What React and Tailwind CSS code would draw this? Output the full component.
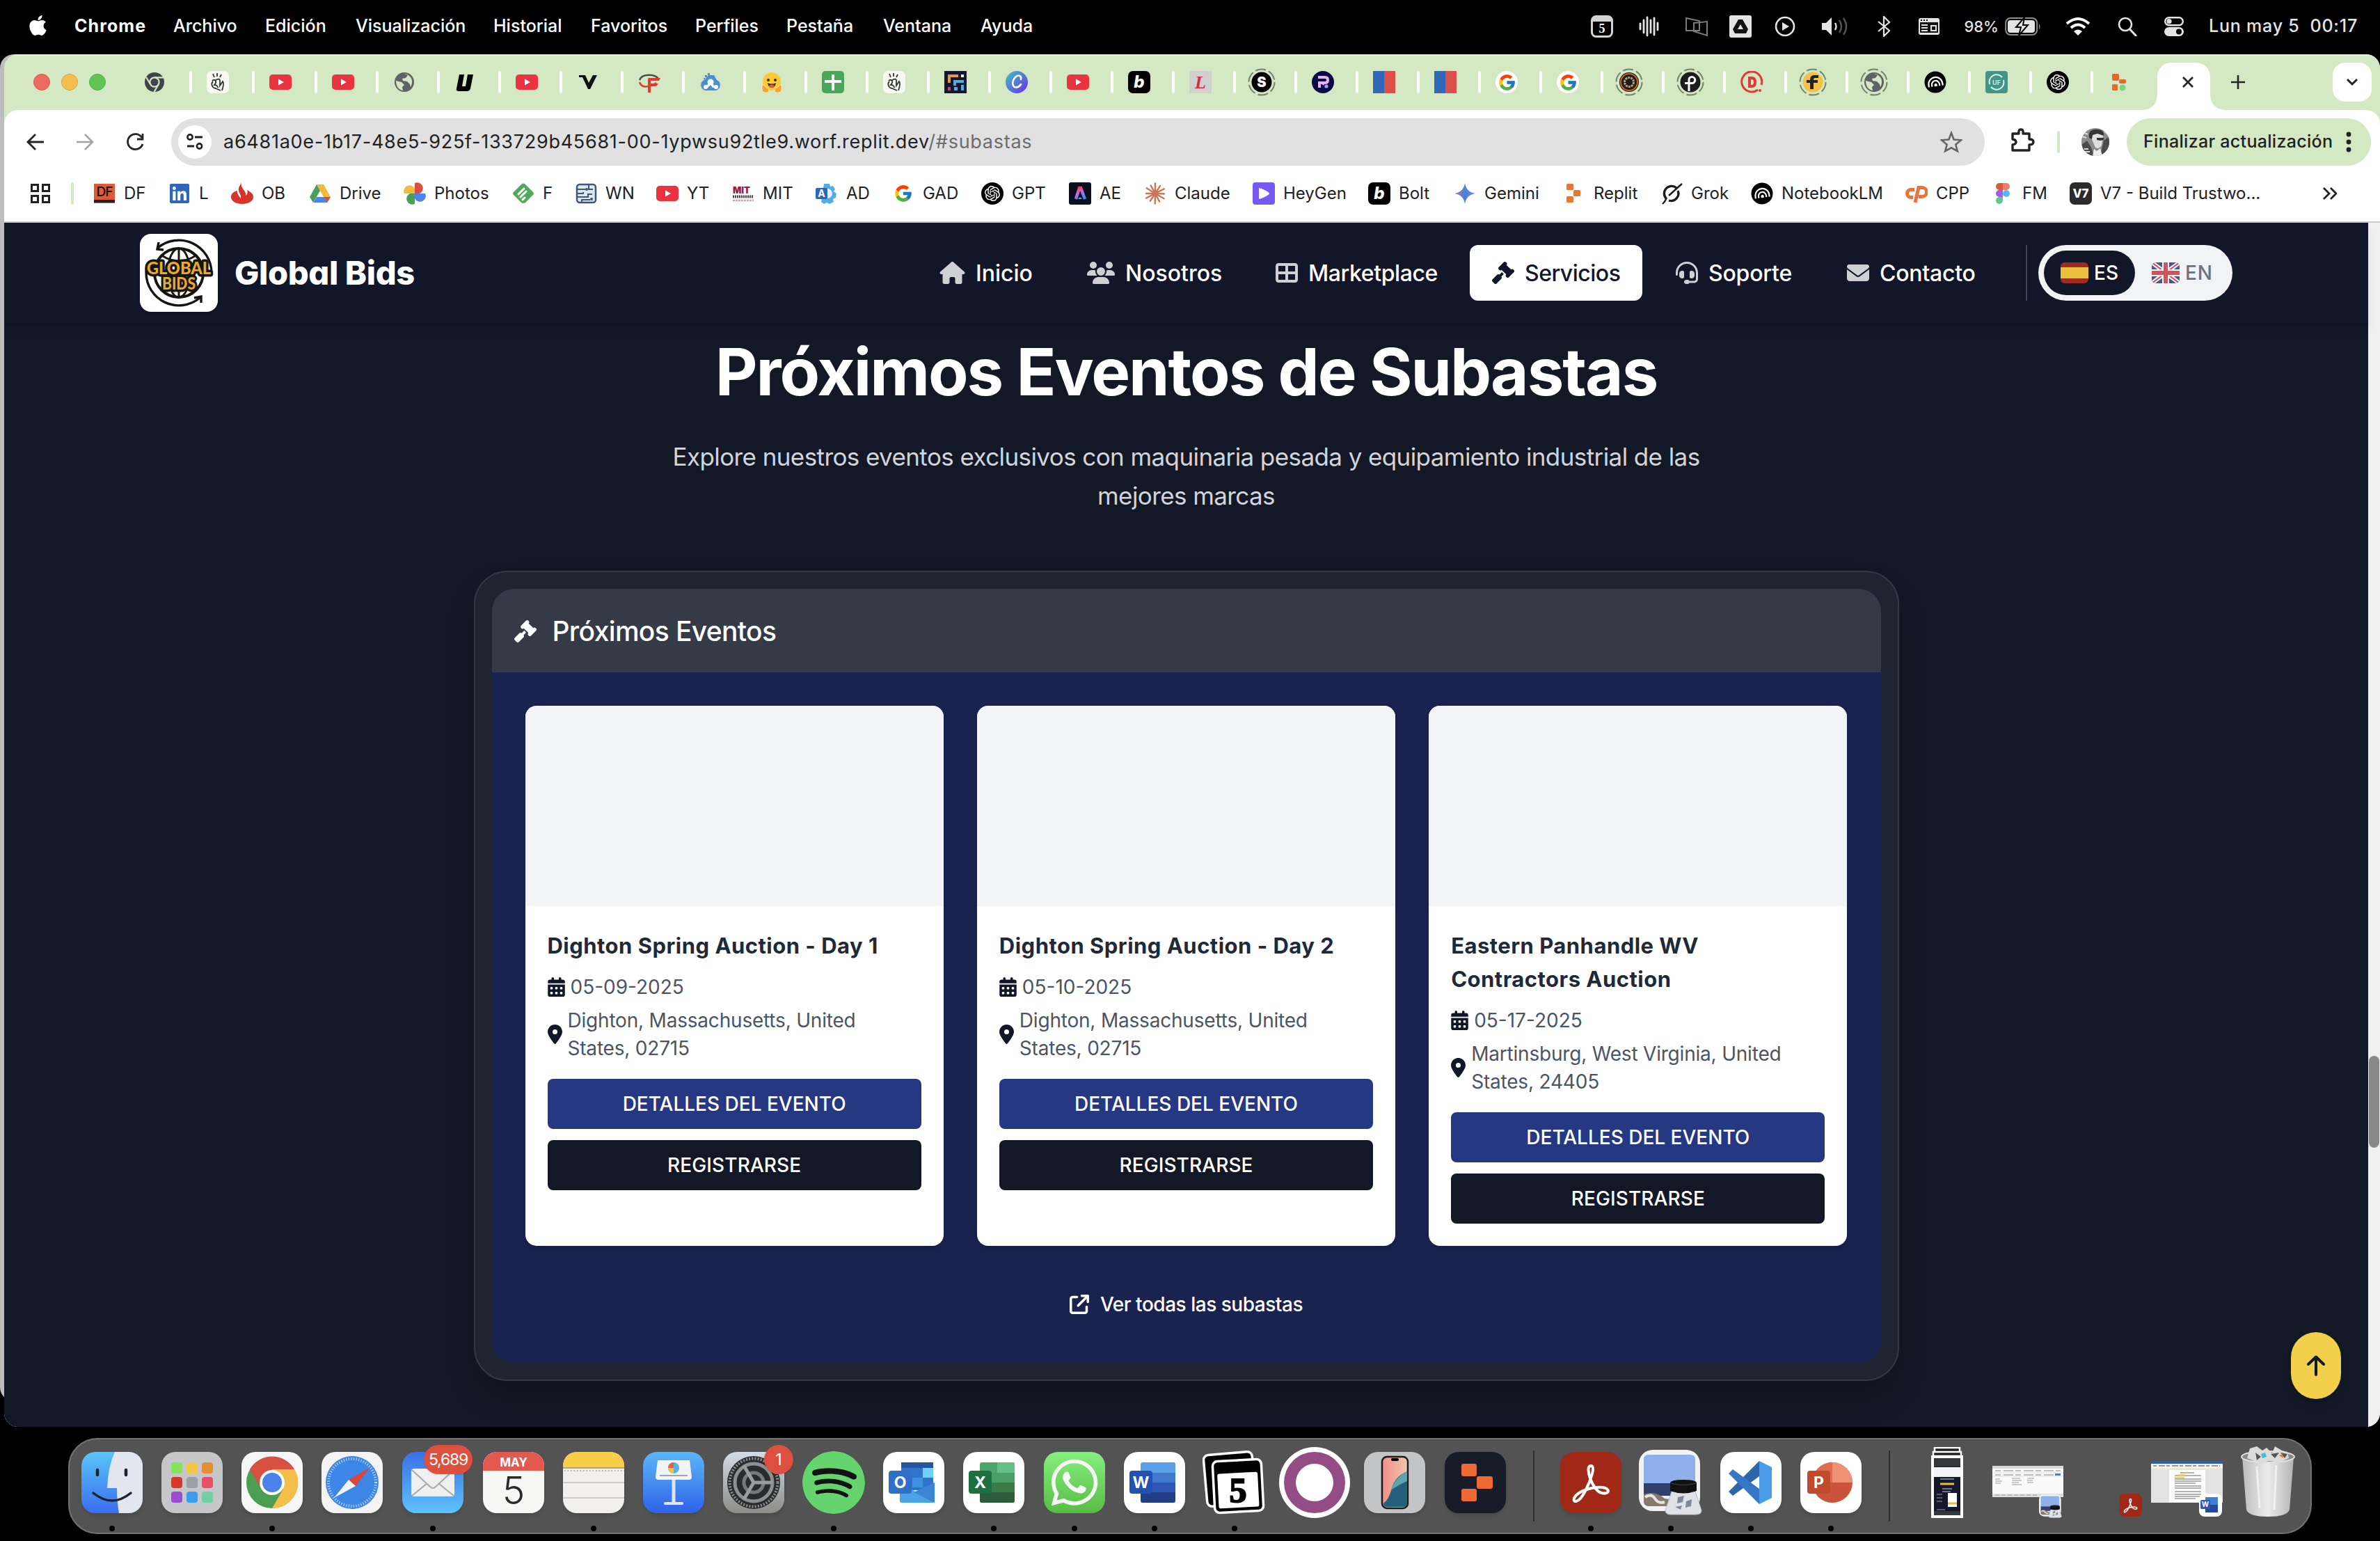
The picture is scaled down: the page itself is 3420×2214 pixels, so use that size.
import React from "react";
import { FaApple, FaLinkedin, FaWhatsapp } from "react-icons/fa";
import { FaHouse, FaUsers, FaTableCellsLarge, FaGavel, FaHeadset, FaEnvelope, FaCalendarDays, FaLocationDot, FaArrowUpRightFromSquare } from "react-icons/fa6";
import { FcGoogle } from "react-icons/fc";
import { SiOpenai, SiSpotify } from "react-icons/si";

const S = ({ w = 32, h, vb, children, className = "" }) => (
  <svg width={w} height={h ?? w} viewBox={vb ?? `0 0 ${w} ${h ?? w}`} fill="none" className={`shrink-0 ${className}`}>
    {children}
  </svg>
);

/* ---------- small icons for tabs and bookmarks ---------- */
const ChromeMono = () => (
  <S>
    <circle cx="16" cy="16" r="14" fill="#414549" />
    <circle cx="16" cy="16" r="6.6" stroke="#d3e8c3" strokeWidth="2.2" />
    <path d="M16 9.4H29M10.3 19.3 4 9M21.7 19.3 15.5 30" stroke="#d3e8c3" strokeWidth="2.2" />
  </S>
);
const Snap = () => (
  <S>
    <rect width="32" height="32" rx="7" fill="#f6faf2" />
    <path d="M9 4l2 5M15 3v5M21 5l-2 4M8 14c3-3 6 0 5 3l-2 3c3 0 5 2 5 4M13 13c4-2 6-2 6 1v7l4-6c2 2 1 7-1 13M9 15c-3 3-2 9 4 10l7 3" stroke="#333" strokeWidth="1.8" />
  </S>
);
const YT = () => (
  <S>
    <rect y="5" width="32" height="22" rx="5" fill="#eb3340" />
    <path d="M13 11.5v9l8-4.5z" fill="#fff" />
  </S>
);
const Dash = ({ children }) => (
  <S w={40} className="-m-1">
    <circle cx="20" cy="20" r="18.5" stroke="#74836c" strokeWidth="2" strokeDasharray="15 4.4" />
    {children}
  </S>
);
const GlobeShape = ({ cx = 16, r = 14 }) => (
  <>
    <circle cx={cx} cy={cx} r={r} fill="#5f6368" />
    <g transform={`translate(${cx - 16} ${cx - 16})`}>
      <path d="M4 14l8 2 4 4-3 3 1 5c-6-1-10-6-10-14zM16 4l5 2-3 4-5 1 1 3 6 1 4 4 1 4c3-5 3-11-1-15-3-3-5-4-8-4z" fill="#d3e8c3" />
    </g>
  </>
);
const Globe = () => <S><GlobeShape /></S>;
const UItal = () => <S><path d="M7 5h7l-3 17h5l3-17h8l-4 20q-1 4-5 4H6q-4 0-3-4z" fill="#000" /></S>;
const VMark = () => <S><path d="M3 6h9l5 11 6-11h6L19 26h-3L8 9H3z" fill="#111" /></S>;
const RF = () => (
  <S>
    <path d="M2 13C5 4 24 3 30 12" stroke="#4b4b48" strokeWidth="2.5" />
    <path d="M15 10h17l-2 4H18v4h11l-3 4h-8v9h-4V14q0-4 1-4z" fill="#df3d31" />
    <path d="M2 16c3 9 13 8 24 1" stroke="#df3d31" strokeWidth="2.5" />
  </S>
);
const Cloud = () => (
  <S>
    <path d="M8 28a8 8 0 0 1-1-15l6-7h8l4 7a8 8 0 0 1-1 15z" fill="#4a8dd2" />
    <circle cx="16" cy="16" r="4.5" fill="#fff" /><circle cx="9" cy="23" r="3" fill="#fff" /><circle cx="24" cy="23" r="3" fill="#fff" /><path d="M16 14l8 10h-5l-3-4-4 4H8z" fill="#fff" />
    <path d="M8 6h3v3H8zM12 3h3v3h-3zM6 10h2v2H6z" fill="#4a8dd2" />
  </S>
);
const Hug = () => (
  <S>
    <circle cx="16" cy="15" r="13" fill="#fdc934" /><circle cx="11" cy="13" r="2" fill="#3b3020" /><circle cx="21" cy="13" r="2" fill="#3b3020" />
    <path d="M10 17q6 3 12 0-1 7-6 7t-6-7z" fill="#3b3020" /><path d="M12 21q4-3 8 0-2 3-4 3t-4-3z" fill="#e8574d" />
    <path d="M2 20q3-1 5 3l4 2q2 4-1 6-7 1-8-4zM30 20q-3-1-5 3l-4 2q-2 4 1 6 7 1 8-4z" fill="#f6a52c" stroke="#fff4dc" strokeWidth=".8" />
  </S>
);
const Plus = () => <S><rect width="32" height="32" rx="5" fill="#4ba65b" /><path d="M14 5h4v8h10v4H18v11h-4V17H4v-4h10z" fill="#fff" /></S>;
const Pixel = () => (
  <S>
    <rect width="32" height="32" fill="#15162e" />
    <path d="M5 5h15v4H9v8H5z" fill="#e39a3c" /><path d="M24 5h4v4h-4z" fill="#fff" />
    <path d="M13 13h15v4H17v4h-4zM24 20h4v8h-4zM14 23h5v5h-5z" fill="#4fb0dd" /><path d="M5 23h4v5H5z" fill="#d53b62" />
  </S>
);
const Canva = () => (
  <S>
    <defs><linearGradient id="cv" x1="0" y1="0" x2="1" y2="1"><stop stopColor="#3fc4cc" /><stop offset="1" stopColor="#6b2be8" /></linearGradient></defs>
    <circle cx="16" cy="16" r="16" fill="url(#cv)" />
    <path d="M22 12c1-5-3-7-7-4s-6 9-4 13 8 3 11-2" stroke="#fff" strokeWidth="2.6" strokeLinecap="round" />
  </S>
);
const LetterTile = ({ bg, ch, fg = "#fff", rx = 7, size = 22, font = "Inter", italic, y = 24 }) => (
  <S>
    <rect width="32" height="32" rx={rx} fill={bg} />
    <text x="16" y={y} textAnchor="middle" fontSize={size} fontWeight="800" fontFamily={font} fontStyle={italic ? "italic" : "normal"} fill={fg}>{ch}</text>
  </S>
);
const Bolt = () => <LetterTile bg="#000" ch="b" italic size={24} />;
const LMark = () => <LetterTile bg="#d0d0ce" ch="L" fg="#cf2f45" rx={0} size={26} font="Liberation Serif" italic y={25} />;
const SDash = () => <Dash><circle cx="20" cy="20" r="14.5" fill="#000" /><text x="20" y="27" textAnchor="middle" fontSize="20" fontWeight="900" fontFamily="Inter" fill="#fff">S</text></Dash>;
const RPurple = () => <S><circle cx="16" cy="16" r="16" fill="#0b0848" /><path d="M9 9h10q4 0 4 4t-4 4h-8v7M16 18l2 1" stroke="#e6b3ea" strokeWidth="4" /><circle cx="21" cy="22" r="2.6" fill="#9fa8f5" /></S>;
const BlueRed = () => <S><path d="M0 0h16v32H0z" fill="#3168b8" /><path d="M16 0h16v32H16z" fill="#dc504c" /></S>;
const GTab = () => <div className="flex size-8 items-center justify-center rounded-full bg-white"><FcGoogle className="size-[27px]" /></div>;
const Ring = () => <Dash><circle cx="20" cy="20" r="14" fill="#1d1a17" /><circle cx="20" cy="20" r="12" stroke="#c8622c" strokeWidth="2" /><circle cx="20" cy="20" r="6.5" stroke="#b59a80" strokeWidth="3" strokeDasharray="3 1" /></Dash>;
const PDash = () => <Dash><circle cx="20" cy="20" r="14.5" fill="#1c1c1e" /><path d="M18 33V15.500a4.500 4.500 0 1 1 4 6H12" stroke="#fff" strokeWidth="3" /></Dash>;
const DRed = () => (
  <S><path d="M25 27A14.500 14.500 0 1 1 30 20" stroke="#de3a3a" strokeWidth="3" /><path d="M11 8h5q7 0 7 8t-7 8h-5z M15 12v8h1q3 0 3-4t-3-4z" fill="#de3a3a" fillRule="evenodd" /><circle cx="28" cy="28" r="2" fill="#de3a3a" /></S>
);
const FDash = () => <Dash><circle cx="20" cy="20" r="14.5" fill="#f4c045" /><path d="M28 10v4h-5q-2 0-2 3h6v4h-6v9h-5v-9h-5v-4h5q0-7 6-7z" fill="#222" /></Dash>;
const GlobeDash = () => <Dash><GlobeShape cx={20} r={14} /></Dash>;
const Notebook = () => (
  <S><circle cx="16" cy="16" r="15.5" fill="#000" /><path d="M6 22v-3a10 10 0 0 1 20 0v3M10.500 22v-2.500a5.500 5.500 0 0 1 11 0V22M15 22v-2a1 1 0 0 1 2 0v2" stroke="#fff" strokeWidth="2.2" transform="rotate(-8 16 16)" /></S>
);
const UF = () => <S><rect width="32" height="32" rx="4" fill="#439488" /><path d="M6 19A10.500 10.500 0 0 1 24 9M26 13a10.500 10.500 0 0 1-18 10" stroke="#d6f3ee" strokeWidth="2" /><text x="16" y="20" fontSize="9" fontWeight="600" fontFamily="Inter" textAnchor="middle" fill="#d6f3ee">UF</text></S>;
const Gpt = () => <div className="flex size-8 items-center justify-center rounded-full bg-black"><SiOpenai className="size-[22px] text-white" /></div>;
const ReplitTab = () => <S><rect x="6" y="4" width="10" height="10" rx="2" fill="#e8672e" /><rect x="16" y="12" width="10" height="6" rx="2" fill="#e8672e" /><rect x="6" y="19" width="8" height="9" rx="1.5" fill="#e8672e" /><circle cx="21" cy="24" r="4.500" fill="#7dd67c" /></S>;
const ReplitIcon = () => <S><rect x="5" y="2" width="10" height="9" rx="1.5" fill="#e8772f" /><rect x="15" y="11" width="10" height="9" rx="1.5" fill="#e8772f" /><rect x="5" y="20" width="10" height="9" rx="1.5" fill="#e8772f" /></S>;

const TABS = [Snap, YT, YT, Globe, UItal, YT, VMark, RF, Cloud, Hug, Plus, Snap, Pixel, Canva, YT, Bolt, LMark, SDash, RPurple, BlueRed, BlueRed, GTab, GTab, Ring, PDash, DRed, FDash, GlobeDash, Notebook, UF, Gpt, ReplitTab];

const DF = () => <S><rect x="1" y="2" width="30" height="28" fill="#e05a35" /><rect x="1" y="25" width="30" height="4" fill="#222" /><text x="16" y="20" textAnchor="middle" fontSize="19" fontWeight="500" fontFamily="Inter" fill="#111" letterSpacing="-1">DF</text></S>;
const Flame = () => <S><path d="M15 0c-1 4 0 6 2 9s5 6 4 10c3-2 3-5 2-8 6 3 9 6 9 10 0 6-7 10-16 10S0 27 0 21c0-5 4-8 9-9-1 4 2 7 5 11 1-4-2-7-3-11-1-5 2-7 4-12z" fill="#d8352a" /></S>;
const Drive = () => <S><path d="M11 3h10l10 18H21z" fill="#f3b93b" /><path d="M11 3 1 21l5 8L16 12z" fill="#4a9e55" /><path d="M11 21h20l-5 8H6z" fill="#4b84ee" /><path d="M31 21l-5 8-4-8z" fill="#dd4b3e" /></S>;
const Photos = () => <S><path d="M16 1v15h7a7.500 7.500 0 0 0-7-15z" fill="#d94f40" /><path d="M31 16H16v7a7.500 7.500 0 0 0 15-7z" fill="#4b84ee" /><path d="M16 31V16H9a7.500 7.500 0 0 0 7 15z" fill="#4a9e55" /><path d="M1 16h15V9a7.500 7.500 0 0 0-15 7z" fill="#f3b93b" /></S>;
const Feedly = () => <S><path d="M13 3q3-3 6 0l11 11q2 2 0 4L19 29q-3 2-6 0L2 18q-2-2 0-4z" fill="#51a85b" /><path d="M9 17l8-8M12 21l8-8M15 25l3-3" stroke="#fff" strokeWidth="3" strokeLinecap="round" /></S>;
const Circuit = () => <S><rect x="3" y="3" width="27" height="26" rx="4" stroke="#3b5878" strokeWidth="2.5" fill="#dfe6ec" /><path d="M3 10h12M3 16h9v-2M3 21h16v-4h6M10 29v-4h12M20 3v7h6" stroke="#3b5878" strokeWidth="2" /><circle cx="17" cy="10" r="2" fill="#3b5878" /><circle cx="24" cy="24" r="2" fill="#3b5878" /></S>;
const Mit = () => <S><text x="1" y="16" fontSize="13" fontWeight="900" fontFamily="Inter" fill="#8c2336" textLength="25" lengthAdjust="spacingAndGlyphs">MIT</text><path d="M1 20.500h30" stroke="#444" strokeWidth="4" strokeDasharray="2 1" /><path d="M1 26h30" stroke="#e29aa2" strokeWidth="2.500" strokeDasharray="3 1" /></S>;
const AD = () => <S><path d="M12 2h8l1 4 4-1 3 5-2 3 4 3-1 6-4 2 1 4-6 3-4-2-4 2-4-3z" fill="#55ace0" /><circle cx="17" cy="16" r="7" fill="#e7f1f8" /><rect y="8" width="17" height="16" rx="2" fill="#2d66b8" /><text x="8.5" y="21" textAnchor="middle" fontSize="14" fontWeight="700" fontFamily="Inter" fill="#fff">A</text></S>;
const GBook = () => <div className="flex size-8 items-center justify-center"><FcGoogle className="size-[28px]" /></div>;
const AE = () => (
  <S><defs><linearGradient id="ae" x1="0" y1="0" x2="0.4" y2="1"><stop stopColor="#ef3d3d" /><stop offset=".5" stopColor="#c56be0" /><stop offset="1" stopColor="#3f8df0" /></linearGradient></defs><rect width="32" height="32" rx="3" fill="#0a0e1d" /><path d="M10 24 15 8h2l6 16" stroke="url(#ae)" strokeWidth="4.500" /><path d="M13.500 24a2.500 2.500 0 0 1 5 0z" fill="#4f9af3" /></S>
);
const Claude = () => (
  <S><g stroke="#ca7557" strokeWidth="2.4" strokeLinecap="round">{[0, 33, 62, 92, 120, 152, 181, 214, 243, 270, 302, 331].map((a, i) => <path key={a} d={i % 2 ? "M16 13V3" : "M16 13V1.5"} transform={`rotate(${a} 16 16)`} />)}</g><circle cx="16" cy="16" r="4" fill="#ca7557" /></S>
);
const HeyGen = () => <S><rect width="32" height="32" rx="4" fill="#7559f2" /><path d="M9 8l4 1q11 5 11 7t-11 7l-4 1z" fill="#fff" /></S>;
const Gemini = () => <S><defs><linearGradient id="gm"><stop stopColor="#9a7fb5" /><stop offset=".5" stopColor="#4f7fd8" /><stop offset="1" stopColor="#5b93e6" /></linearGradient></defs><path d="M16 1q2 13 15 15-13 2-15 15-2-13-15-15 13-2 15-15z" fill="url(#gm)" /></S>;
const Grok = () => <S><path d="M23 8A10.500 10.500 0 1 0 9 24M25 12A10.500 10.500 0 0 1 12 26" stroke="#1c1c1e" strokeWidth="3.4" /><path d="M31 2 12 19M3 31c4-4 5-6 5-8" stroke="#1c1c1e" strokeWidth="2.4" /></S>;
const Cpp = () => <S><path d="M13 10.500H8a5.500 5.500 0 0 0 0 11h3M14 29l5-21.500h5a6 6 0 0 1 0 13h-5" stroke="#e9743b" strokeWidth="5" /></S>;
const Figma = () => <S><path d="M16 1h-5a5 5 0 0 0 0 10h5z" fill="#d95b38" /><path d="M16 1h5a5 5 0 0 1 0 10h-5z" fill="#ee7d6e" /><path d="M16 11h-5a5 5 0 0 0 0 10h5z" fill="#9a5cf3" /><circle cx="21" cy="16" r="5" fill="#55b5f5" /><path d="M16 21h-5a5 5 0 1 0 5 5z" fill="#5cc88a" /></S>;
const V7 = () => <LetterTile bg="#2b2b2d" ch="V7" size={17} y={22} />;
const Linked = () => <div className="flex size-8 items-center justify-center"><FaLinkedin className="size-8 text-[#2d67bb]" /></div>;

const MARKS = [
  [DF, "DF", "w-[108px]"], [Linked, "L", "w-[90px]"], [Flame, "OB", "w-[112px]"], [Drive, "Drive", "w-[136px]"],
  [Photos, "Photos", "w-[156px]"], [Feedly, "F", "w-[90px]"], [Circuit, "WN", "w-[117px]"], [YT, "YT", "w-[109px]"],
  [Mit, "MIT", "w-[120px]"], [AD, "AD", "w-[110px]"], [GBook, "GAD", "w-[128px]"], [Gpt, "GPT", "w-[126px]"],
  [AE, "AE", "w-[108px]"], [Claude, "Claude", "w-[156px]"], [HeyGen, "HeyGen", "w-[166px]"], [Bolt, "Bolt", "w-[123px]"],
  [Gemini, "Gemini", "w-[157px]"], [ReplitIcon, "Replit", "w-[140px]"], [Grok, "Grok", "w-[130px]"], [Notebook, "NotebookLM", "w-[222px]"],
  [Cpp, "CPP", "w-[124px]"], [Figma, "FM", "w-[112px]"], [V7, "V7 - Build Trustwo...", "w-[364px]"],
];

/* ---------- macOS menu bar ---------- */
const MENUS = [["Archivo", "w-[132px]"], ["Edición", "w-[130px]"], ["Visualización", "w-[198px]"], ["Historial", "w-[140px]"], ["Favoritos", "w-[150px]"], ["Perfiles", "w-[131px]"], ["Pestaña", "w-[139px]"], ["Ventana", "w-[140px]"], ["Ayuda", "w-[100px]"]];

function MenuBar() {
  return (
    <div className="flex h-[78px] shrink-0 items-center bg-black pb-[2px] pl-[38px] text-[25px] font-[450] text-white">
      <FaApple className="mb-1 size-[33px] shrink-0" />
      <span className="ml-[36px] w-[142px] font-bold tracking-[1.1px]">Chrome</span>
      {MENUS.map(([t, w]) => <span key={t} className={`${w} shrink-0`}>{t}</span>)}
      <div className="ml-auto flex items-center text-[#e4e4e4]">
        <S w={32} className="mr-[37px]"><rect x="1.5" y="1.5" width="29" height="29" rx="6" stroke="#d4d4d4" strokeWidth="3" /><path d="M2 3h28v6H2z" fill="#d4d4d4" /><text x="16" y="25" textAnchor="middle" fontSize="18" fontWeight="800" fontFamily="Liberation Serif" fill="#fff">5</text></S>
        <S w={30} h={32} className="mr-[37px]"><path d="M2 12v8M7 7v18M12 3v26M17 7v18M22 4v24M27 11v10" stroke="#e4e4e4" strokeWidth="2.8" strokeLinecap="round" /></S>
        <S w={32} className="mr-[31px]"><path d="M1 4l19 4v14L1 22zM12 11l19-2v20l-19-6z" stroke="#7c7c7c" strokeWidth="2" /></S>
        <S w={32} className="mr-[33px]"><rect width="32" height="32" rx="3" fill="#e4e4e4" /><path d="M13 6h6l8 14-3 6H8l-3-6zM16 13l-4 7h8z" fill="#111" fillRule="evenodd" /></S>
        <S w={30} className="mr-[37px]"><circle cx="15" cy="15" r="13" stroke="#e4e4e4" strokeWidth="2.6" /><path d="M11 9v12l10-6z" fill="#e4e4e4" /></S>
        <S w={40} h={32} className="mr-[40px]"><path d="M1 11h6l8-8v26l-8-8H1z" fill="#e4e4e4" /><path d="M20 11q3 5 0 10" stroke="#e4e4e4" strokeWidth="2.4" /><path d="M26 7q6 9 0 18M32 4q8 12 0 24" stroke="#555" strokeWidth="2.4" /></S>
        <S w={20} h={30} className="mr-[39px]"><path d="M2 8l16 13-8 8V1l8 8L2 22" stroke="#e4e4e4" strokeWidth="2.2" /></S>
        <S w={32} h={26} className="mr-[34px]"><rect x="1" y="1" width="30" height="24" rx="3" fill="#e4e4e4" /><path d="M4 4h2M8 4h2M12 4h2" stroke="#000" strokeWidth="2" /><path d="M3 7h26v15H3z" fill="#111" /><path d="M5 11h9M5 15h9M5 19h9" stroke="#e4e4e4" strokeWidth="2" /><path d="M19 12h7v7h-7z" stroke="#e4e4e4" strokeWidth="2" /></S>
        <span className="mr-[9px] text-[22px]">98%</span>
        <S w={52} h={28} className="mr-[35px]"><rect x="1.2" y="2" width="45" height="24" rx="7" stroke="#8d8d8d" strokeWidth="2" /><rect x="4" y="5" width="39" height="18" rx="4" fill="#e4e4e4" /><path d="M49 10q3 4 0 8z" fill="#8d8d8d" /><path d="M28 1 16 15h7l-3 12 13-15h-7z" fill="#e4e4e4" stroke="#000" strokeWidth="2" /></S>
        <S w={36} h={28} className="mr-[39px]"><path d="M2 10q16-14 32 0M8 16q10-9 20 0" stroke="#fff" strokeWidth="4" /><path d="M12 21q6-5 12 0l-6 6z" fill="#fff" /></S>
        <S w={28} className="mr-[39px]"><circle cx="11" cy="11" r="9" stroke="#e4e4e4" strokeWidth="2.6" /><path d="M17.5 18 26 27" stroke="#e4e4e4" strokeWidth="3" strokeLinecap="round" /></S>
        <S w={28} className="mr-[36px]"><rect x="1.2" y="1.2" width="25.6" height="11" rx="5.5" stroke="#e4e4e4" strokeWidth="2.4" /><circle cx="7" cy="6.7" r="3.6" fill="#e4e4e4" /><rect y="15" width="28" height="13" rx="6.5" fill="#e4e4e4" /><circle cx="21" cy="21.5" r="4" fill="#000" /></S>
        <span className="mr-[32px] whitespace-pre tracking-[0.8px]">Lun may 5  00:17</span>
      </div>
    </div>
  );
}

/* ---------- Chrome window ---------- */
function TabStrip() {
  return (
    <div className="flex h-20 shrink-0 items-center border-t-2 border-[#e7f2de] bg-[#d3e8c3] pb-[2px] pl-[42px]">
      <div className="flex w-[158px] shrink-0 gap-4">
        <span className="size-6 rounded-full border border-[#d5594f] bg-[#ec6a5e]" />
        <span className="size-6 rounded-full border border-[#dca441] bg-[#f4bf4f]" />
        <span className="size-6 rounded-full border border-[#51ad43] bg-[#61c554]" />
      </div>
      <div className="w-[66px] shrink-0"><ChromeMono /></div>
      {TABS.map((Icon, i) => (
        <div key={i} className={`flex shrink-0 items-center gap-[21px] ${i < 2 ? "w-[90px]" : "w-[88px]"}`}>
          <span className="h-8 w-1 rounded-full bg-white" />
          <Icon />
        </div>
      ))}
      <div className="-mb-[2px] -ml-4 flex h-[68px] w-[124px] shrink-0 items-end self-end">
        <S w={24} h={24} vb="0 0 24 24"><path d="M24 0v24H0Q24 24 24 0z" fill="#fff" /></S>
        <div className="flex h-[68px] w-[76px] shrink-0 items-center justify-center rounded-t-[20px] bg-white pb-3 pl-3">
          <S w={18} h={18}><path d="M2 2l14 14M16 2 2 16" stroke="#222427" strokeWidth="2.8" /></S>
        </div>
        <S w={24} h={24} vb="0 0 24 24"><path d="M0 0v24h24Q0 24 0 0z" fill="#fff" /></S>
      </div>
      <S w={20} h={20} className="ml-[6px]"><path d="M10 0v20M0 10h20" stroke="#222427" strokeWidth="2.6" /></S>
      <div className="ml-[126px] flex size-14 shrink-0 items-center justify-center rounded-[18px] bg-white">
        <S w={18} h={12}><path d="M2 2l7 7 7-7" stroke="#222427" strokeWidth="3" /></S>
      </div>
    </div>
  );
}

function Toolbar() {
  return (
    <div className="flex h-[92px] shrink-0 items-center rounded-t-[20px] bg-white pl-8">
      <S w={26} h={24} className="mr-[45px]"><path d="M25 12H2M13 1 2 12l11 11" stroke="#222427" strokeWidth="2.8" /></S>
      <S w={26} h={24} className="mr-[45px]"><path d="M1 12h23M13 1l11 11-11 11" stroke="#a3a3a3" strokeWidth="2.6" /></S>
      <S w={28} h={28} className="mr-[38px]"><path d="M24 8A11 11 0 1 0 25 17" stroke="#222427" strokeWidth="2.8" /><path d="M25 2v8h-8" stroke="#222427" strokeWidth="2.8" /></S>
      <div className="flex h-[68px] w-[2606px] shrink-0 items-center rounded-full bg-[#e1e1e1] pl-[10px] text-[27px] tracking-[0.73px] text-[#202124]">
        <div className="flex size-12 shrink-0 items-center justify-center rounded-full bg-white">
          <S w={26} h={24}><circle cx="6" cy="5" r="3.6" stroke="#202124" strokeWidth="2.6" /><path d="M13 5h11M2 18h10" stroke="#202124" strokeWidth="2.8" /><circle cx="19.5" cy="18" r="3.6" stroke="#202124" strokeWidth="2.6" /></S>
        </div>
        <span className="ml-[17px]">a6481a0e-1b17-48e5-925f-133729b45681-00-1ypwsu92tle9.worf.replit.dev<span className="text-[#6a6c6f]">/#subastas</span></span>
        <S w={32} h={32} className="mr-[32px] ml-auto"><path d="M16 3l3.600 9.500 10.400.8-7.700 6.500 2.500 9.300L16 24.300l-8.800 4.800 2.500-9.300L2 13.300l10.400-.8z" stroke="#636567" strokeWidth="2.6" /></S>
      </div>
      <S w={36} h={36} className="mt-[-6px] ml-[36px]"><path d="M4 9h9q-1-6 3-6t3 6h9v8q6 0 6 4t-6 4v8H4v-8q5-1 5-4t-5-4z" stroke="#202124" strokeWidth="3.4" strokeLinejoin="round" /></S>
      <span className="ml-[32px] h-8 w-1 rounded-full bg-[#d3e8c3]" />
      <S w={40} h={40} className="ml-[31px] rounded-full"><path d="M0 0h40v40H0z" fill="#8b8b8b" /><path d="M0 24l8-6 6 10 4 12H0zM32 18l8-6v28H27z" fill="#4a4a4a" /><path d="M13 12q0-9 9-9t9 8l-2 14q-4 6-9 3z" fill="#dedede" /><path d="M11 14Q9 2 21 2t11 9l-9-3-7 2-1 6zM22 14h10v3l-5 1-5-1z" fill="#333" /><path d="M18 30l4 3 5-4 3 11H16z" fill="#eee" /><path d="M2 6l7 3M1 12l6 2M33 5l5 4M3 34h9M4 30h6" stroke="#d9d9d9" strokeWidth="2" /></S>
      <div className="ml-[25px] flex h-[68px] w-[351px] shrink-0 items-center rounded-full bg-[#d3e8c3] pl-[24px] text-[25px] font-[450] tracking-[0.3px] text-[#202124]">
        Finalizar actualización
        <S w={8} h={30} className="ml-auto mr-[28px]"><circle cx="4" cy="4" r="3.4" fill="#202124" /><circle cx="4" cy="15" r="3.4" fill="#202124" /><circle cx="4" cy="26" r="3.4" fill="#202124" /></S>
      </div>
    </div>
  );
}

function Bookmarks() {
  return (
    <div className="flex h-[70px] shrink-0 items-center border-b-2 border-[#cbcbcb] bg-white pb-[12px] pl-[38px] text-[24px] text-[#202124]">
      <S w={28} h={28}><path d="M1.5 1.5h9v9h-9zM17.5 1.5h9v9h-9zM1.5 17.5h9v9h-9zM17.5 17.5h9v9h-9z" stroke="#202124" strokeWidth="3" /></S>
      <span className="ml-[30px] mr-[28px] h-8 w-1 rounded-full bg-[#d3e8c3]" />
      {MARKS.map(([Icon, t, w]) => (
        <div key={t} className={`flex shrink-0 items-center gap-[12px] whitespace-nowrap ${w}`}><Icon /><span>{t}</span></div>
      ))}
      <S w={20} h={18}><path d="M1 1l8 8-8 8M11 1l8 8-8 8" stroke="#202124" strokeWidth="2.8" /></S>
    </div>
  );
}

/* ---------- Global Bids page ---------- */
const NAV = [
  [FaHouse, "Inicio", "w-[196px] mr-4", "w-[37px]", ""],
  [FaUsers, "Nosotros", "w-[255px] mr-4", "w-10", ""],
  [FaTableCellsLarge, "Marketplace", "w-[295px] mr-4", "w-8", "tracking-[-0.4px]"],
  [FaGavel, "Servicios", "w-[248px] mr-4", "w-8", "tracking-[-0.5px]"],
  [FaHeadset, "Soporte", "w-[230px] mr-4", "w-8", "tracking-[-0.2px]"],
  [FaEnvelope, "Contacto", "w-[248px]", "w-8", "tracking-[-0.25px]"],
];

const Logo = () => (
  <S w={112} className="rounded-2xl bg-white shadow-md">
    <circle cx="56" cy="56" r="35" stroke="#15140f" strokeWidth="4" />
    <ellipse cx="56" cy="56" rx="16" ry="35" stroke="#15140f" strokeWidth="3" />
    <path d="M56 21v70M33 32q23 14 46 0M33 80q23-12 46 0" stroke="#15140f" strokeWidth="3" />
    <path d="M26 20A47 47 0 0 1 103 56" stroke="#15140f" strokeWidth="3.4" />
    <path d="M86 92A47 47 0 0 1 9 56q0-8 2-13" stroke="#15140f" strokeWidth="3.4" />
    <path d="M27 12l-2 10 9 1M78 92l10-2v9" stroke="#15140f" strokeWidth="3.4" />
    <g fontFamily="Lato" fontWeight="900" textAnchor="middle" fill="#e5ab2f" stroke="#15140f" strokeWidth="7" strokeLinejoin="round" paintOrder="stroke">
      <text x="56" y="58" fontSize="24" textLength="92" lengthAdjust="spacingAndGlyphs">GLOBAL</text>
      <text x="56" y="80" fontSize="24" textLength="48" lengthAdjust="spacingAndGlyphs">BIDS</text>
    </g>
  </S>
);

const FlagES = () => <S w={40} h={30} className="rounded-[6px]"><path d="M0 0h40v30H0z" fill="#a02a24" /><path d="M0 7h40v16H0z" fill="#eac13e" /></S>;
const FlagUK = () => (
  <S w={40} h={30} className="rounded-[6px] opacity-80"><path d="M0 0h40v30H0z" fill="#1f2f6e" /><path d="M0 0l40 30M40 0 0 30" stroke="#fff" strokeWidth="6" /><path d="M0 0l40 30M40 0 0 30" stroke="#c22f3b" strokeWidth="2.2" /><path d="M20 0v30M0 15h40" stroke="#fff" strokeWidth="10" /><path d="M20 0v30M0 15h40" stroke="#c22f3b" strokeWidth="6" /></S>
);

function Header() {
  return (
    <header className="flex h-36 shrink-0 items-center justify-between bg-[#111629] px-[195px] text-white shadow-lg">
      <div className="flex items-center gap-[24px]">
        <Logo />
        <span className="text-[47px] font-extrabold tracking-[-0.35px] [font-feature-settings:'cv11']">Global Bids</span>
      </div>
      <nav className="flex items-center text-[32px] font-[450]">
        {NAV.map(([Icon, t, w, iw, tr]) => {
          const on = t === "Servicios";
          return (
            <div key={t} className={`flex h-20 shrink-0 items-center gap-[15px] rounded-xl pl-8 whitespace-nowrap ${w} ${tr} ${on ? "bg-white text-[#111629]" : ""}`}>
              <Icon className={`h-8 shrink-0 ${iw} ${on ? "" : "text-[#cfd0d4]"}`} /><span className="pt-[2px]">{t}</span>
            </div>
          );
        })}
        <div className="ml-[41px] flex h-20 items-center border-l-2 border-[#3f4354] pl-4">
          <div className="flex h-20 w-[279px] items-center rounded-full bg-[#f2f3f5] pl-2 text-[28px] tracking-normal">
            <div className="flex h-16 w-[131px] items-center gap-2 rounded-full bg-[#111629] pl-6"><FlagES />ES</div>
            <div className="flex items-center gap-2 pl-[24px] tracking-[0.8px] text-[#6b7280]"><FlagUK />EN</div>
          </div>
        </div>
      </nav>
    </header>
  );
}

const EVENTS = [
  [["Dighton Spring Auction - Day 1"], "05-09-2025", ["Dighton, Massachusetts, United", "States, 02715"]],
  [["Dighton Spring Auction - Day 2"], "05-10-2025", ["Dighton, Massachusetts, United", "States, 02715"]],
  [["Eastern Panhandle WV", "Contractors Auction"], "05-17-2025", ["Martinsburg, West Virginia, United", "States, 24405"]],
];

function EventCard({ title, date, place }) {
  return (
    <article className="overflow-hidden rounded-2xl bg-white shadow-lg">
      <div className="h-72 bg-[#f3f4f6]" />
      <div className="p-8">
        <h3 className="relative top-px text-[31px] leading-[48px] font-[650] tracking-[0.48px] text-[#1f2937]">
          {title.map((l) => <span key={l} className="block whitespace-nowrap">{l}</span>)}
        </h3>
        <div className="mt-4 flex h-10 items-center gap-[8px] text-[28px] text-[#4b5563]">
          <FaCalendarDays className="h-7 w-[25px] shrink-0 text-[#111629]" />{date}
        </div>
        <div className="mt-2 flex items-center gap-[8px] text-[28px] leading-10 tracking-[-0.2px] text-[#4b5563]">
          <FaLocationDot className="h-7 w-[21px] shrink-0 text-[#111629]" />
          <div>{place.map((l) => <span key={l} className="block whitespace-nowrap">{l}</span>)}</div>
        </div>
        <div className="mt-6 flex h-[72px] items-center justify-center rounded-lg bg-[#263882] text-[28px] font-[450] text-white">DETALLES DEL EVENTO</div>
        <div className="mt-4 flex h-[72px] items-center justify-center rounded-lg bg-[#121825] text-[28px] font-[450] tracking-[0.1px] text-white">REGISTRARSE</div>
      </div>
    </article>
  );
}

function Page() {
  return (
    <div className="relative flex h-[1730px] w-[3397px] shrink-0 flex-col bg-[#121825]">
      <Header />
      <h1 className="mt-[22px] text-center text-[94px] leading-[96px] font-bold tracking-[-2.03px] text-white">Próximos Eventos de Subastas</h1>
      <p className="mt-[46px] text-center text-[35px] leading-[56px] tracking-[-0.59px] text-[#d1d5db]">
        Explore nuestros eventos exclusivos con maquinaria pesada y equipamiento industrial de las<br />mejores marcas
      </p>
      <section className="mx-auto mt-20 w-[2048px] rounded-[48px] border-2 border-[#353946] bg-[#1f2431] p-6 shadow-2xl">
        <div className="overflow-hidden rounded-[32px] bg-[#1a2350]">
          <div className="flex h-[120px] items-center gap-[23px] bg-[#343a46] pt-[2px] pl-8 text-[39px] font-[450] tracking-[-0.65px] text-white">
            <FaGavel className="size-8" />Próximos Eventos
          </div>
          <div className="grid grid-cols-3 gap-12 p-12 pb-0">
            {EVENTS.map(([title, date, place]) => <EventCard key={date} title={title} date={date} place={place} />)}
          </div>
          <div className="mt-16 mb-[64px] flex h-10 items-center justify-center gap-4 text-[28px] font-[450] tracking-[-0.48px] text-white">
            <FaArrowUpRightFromSquare className="size-7" />Ver todas las subastas
          </div>
        </div>
      </section>
      <div className="absolute right-[39px] bottom-10 flex h-24 w-[72px] items-center justify-center rounded-full bg-[#f3d04b] shadow-lg">
        <S w={28} h={30}><path d="M14 28V3M3 13 14 2.500 25 13" stroke="#121825" strokeWidth="4" strokeLinecap="round" strokeLinejoin="round" /></S>
      </div>
    </div>
  );
}

/* ---------- Dock ---------- */
const Tile = ({ children, className = "" }) => (
  <S w={88} className={`rounded-[20px] shadow-md ${className}`}>{children}</S>
);
const Finder = () => (
  <Tile><defs><linearGradient id="f1" x2="0" y2="1"><stop stopColor="#5ac4f8" /><stop offset="1" stopColor="#3a6ef0" /></linearGradient></defs><path d="M0 0h88v88H0z" fill="url(#f1)" /><path d="M48 0h40v88H54q-3-16-3-36H37Q38 22 48 0z" fill="#e2e6ee" /><path d="M23 26v7M64 26v7" stroke="#1b2433" strokeWidth="4.5" strokeLinecap="round" /><path d="M17 59q27 22 54 0" stroke="#1b2433" strokeWidth="3.5" strokeLinecap="round" /></Tile>
);
const Launchpad = () => (
  <Tile><path d="M0 0h88v88H0z" fill="#c6c7c8" />{["#86e35c", "#f3c742", "#e58f35", "#d33a2c", "#9aa0a6", "#e8506a", "#9b4fd0", "#3d9bf0", "#6fd0a4"].map((c, i) => <rect key={c} x={14 + (i % 3) * 22} y={15 + Math.floor(i / 3) * 21} width="16" height="16" rx="4" fill={c} />)}</Tile>
);
const ChromeDock = () => (
  <Tile><path d="M0 0h88v88H0z" fill="#f6f6f6" /><circle cx="44" cy="44" r="37" fill="#4c9e52" /><path d="M12 25A37 37 0 0 1 76 25H44L28 53z" fill="#d85040" /><path d="M76 25A37 37 0 0 1 44 81L60 53 44 25z" fill="#f3bf48" /><circle cx="44" cy="44" r="18" fill="#fff" /><circle cx="44" cy="44" r="14" fill="#4a82ea" /></Tile>
);
const Safari = () => (
  <Tile><path d="M0 0h88v88H0z" fill="#f3f3f4" /><circle cx="44" cy="44" r="38" fill="#3b86e6" /><circle cx="44" cy="44" r="34" stroke="#d6e6fa" strokeWidth="4" strokeDasharray="1 2.6" /><path d="M70 22 49 49l-10-9z" fill="#e0453a" /><path d="M18 66l21-26 10 9z" fill="#f4f4f6" /></Tile>
);
const Mail = () => (
  <Tile><defs><linearGradient id="ml" x2="0" y2="1"><stop stopColor="#3a6fe8" /><stop offset="1" stopColor="#5fc3fa" /></linearGradient></defs><path d="M0 0h88v88H0z" fill="url(#ml)" /><rect x="13" y="24" width="62" height="40" rx="4" fill="#f0f0f0" /><path d="M14 26l26 24q4 4 8 0l26-24M14 63l22-18M74 63 52 45" stroke="#a9a9a9" strokeWidth="2" /></Tile>
);
const Cal = () => (
  <Tile><path d="M0 0h88v88H0z" fill="#f7f7f5" /><path d="M0 0h88v27H0z" fill="#e3594d" /><text x="44" y="21" textAnchor="middle" fontSize="17" fontWeight="700" fontFamily="Inter" fill="#fff">MAY</text><text x="44" y="75" textAnchor="middle" fontSize="55" fontWeight="300" fontFamily="Inter" fill="#2a2a2a">5</text></Tile>
);
const Notes = () => (
  <Tile><path d="M0 0h88v88H0z" fill="#f1f0ec" /><path d="M0 0h88v22H0z" fill="#f6cf47" /><path d="M0 23h88" stroke="#b5a46c" strokeWidth="2" /><path d="M2 27h86" stroke="#a9a9a6" strokeWidth="2" strokeDasharray="1.5 3" /><path d="M0 44h88M0 66h88" stroke="#cdccca" strokeWidth="2" /></Tile>
);
const Keynote = () => (
  <Tile><defs><linearGradient id="kn" x2="0" y2="1"><stop stopColor="#5cb7f8" /><stop offset="1" stopColor="#2f62ea" /></linearGradient></defs><path d="M0 0h88v88H0z" fill="url(#kn)" /><path d="M21 12h46l3 24q0 4-4 4H22q-4 0-4-4z" fill="#f2f4f6" /><path d="M24 34h40" stroke="#9aa4b0" strokeWidth="2" /><circle cx="44" cy="23" r="8" fill="#55b3ea" /><path d="M44 23v-8a8 8 0 0 0-8 8z" fill="#e9663c" /><path d="M44 23h-8a8 8 0 0 0 8 8z" fill="#f2c23f" /><path d="M44 40v33" stroke="#dfe5ec" strokeWidth="5" /><path d="M32 74h24" stroke="#dfe5ec" strokeWidth="4" strokeLinecap="round" /></Tile>
);
const Settings = () => (
  <Tile><defs><linearGradient id="st" x2="0" y2="1"><stop stopColor="#d3dde6" /><stop offset="1" stopColor="#8d8c88" /></linearGradient></defs><path d="M0 0h88v88H0z" fill="url(#st)" /><circle cx="44" cy="44" r="38" fill="#2a2b2c" /><circle cx="44" cy="44" r="34.5" stroke="#8d9093" strokeWidth="4" strokeDasharray="2 2.2" /><circle cx="44" cy="44" r="27" stroke="#8d9093" strokeWidth="5" /><circle cx="44" cy="44" r="14" stroke="#77797b" strokeWidth="5" /><path d="M44 44h27M44 44 30 20M44 44 30 68" stroke="#9a9c9e" strokeWidth="5" /></Tile>
);
const Spotify = () => <div className="size-[90px] rounded-full bg-[#121212]"><SiSpotify className="size-[90px] text-[#65d36e]" /></div>;
const Office = ({ ch, badge, c }) => (
  <Tile className="bg-white">
    <rect x="24" y="15" width="50" height="58" rx="3" fill={c[0]} /><path d="M49 15h22q3 0 3 3v12H49z" fill={c[1]} /><path d="M24 30h50v14H24z" fill={c[2]} /><path d="M24 44h50v14H24z" fill={c[3]} /><path d="M24 58h50v12q0 3-3 3H27q-3 0-3-3z" fill={c[4]} />
    <rect x="8" y="27" width="33" height="33" rx="4" fill={badge} /><text x="24.5" y="52" textAnchor="middle" fontSize="23" fontWeight="700" fontFamily="Inter" fill="#fff">{ch}</text>
  </Tile>
);
const Outlook = () => (
  <Tile className="bg-white"><rect x="26" y="15" width="46" height="40" rx="3" fill="#2f73cc" /><path d="M26 15h46v8H26z" fill="#2257a0" /><path d="M57 23h15v14H57z" fill="#6fd0fa" /><path d="M42 37h15v14H42z" fill="#3d92de" /><path d="M24 44l24 14 26-14v26q0 3-3 3H27q-3 0-3-3z" fill="#4ba3e6" /><path d="M44 58l30 15V44z" fill="#3d84d4" /><rect x="8" y="27" width="33" height="33" rx="4" fill="#2f6fc9" /><text x="24.5" y="52" textAnchor="middle" fontSize="23" fontWeight="700" fontFamily="Inter" fill="#fff">O</text></Tile>
);
const Whats = () => <div className="flex size-[88px] items-center justify-center rounded-[20px] bg-linear-to-b from-[#86ee7c] to-[#57bd45]"><FaWhatsapp className="size-[76px] text-[#f6f6f6]" /></div>;
const CalApp = () => (
  <S w={92} h={92}><rect x="4" y="4" width="70" height="74" rx="7" fill="#000" stroke="#fff" strokeWidth="3.5" transform="rotate(-5 39 41)" /><rect x="16" y="14" width="70" height="74" rx="7" fill="#000" stroke="#fff" strokeWidth="3.5" transform="rotate(-3 51 51)" /><rect x="22" y="32" width="58" height="50" rx="3" fill="#fff" transform="rotate(-3 51 51)" /><text x="51" y="74" textAnchor="middle" fontSize="50" fontWeight="900" fontFamily="Liberation Serif" fill="#000" stroke="#000" strokeWidth="2">5</text></S>
);
const RingApp = () => <S w={102}><circle cx="51" cy="51" r="51" fill="#fff" /><circle cx="51" cy="51" r="44" fill="#944d84" /><circle cx="51" cy="51" r="27" fill="#fff" /></S>;
const Phone = () => (
  <Tile><defs><linearGradient id="ph" x2="1" y2="0"><stop stopColor="#f08f8c" /><stop offset="1" stopColor="#f2c6a8" /></linearGradient></defs><path d="M0 0h88v88H0z" fill="#c3c4c5" /><rect x="26" y="7" width="37" height="74" rx="7" fill="url(#ph)" stroke="#1c1c1e" strokeWidth="2.5" /><path d="M28 74q8-6 12-22T62 28v46q0 5-5 5H33q-5 0-5-5z" fill="#245f7c" /><path d="M39 55q5-18 23-27v14q-14 6-23 13z" fill="#5ba6ac" /><rect x="39" y="9" width="11" height="4" rx="2" fill="#000" /></Tile>
);
const ReplitDock = () => <Tile><path d="M0 0h88v88H0z" fill="#181c28" /><rect x="24" y="17" width="22" height="18" rx="3" fill="#ee6a34" /><rect x="46" y="35" width="23" height="18" rx="3" fill="#ee6a34" /><rect x="24" y="53" width="22" height="18" rx="3" fill="#ee6a34" /></Tile>;
const AcroShape = () => <path d="M44 20c-5 0-4 10-1 18 3 9 10 20 17 21 9 2 12-4 5-7-9-3-27 0-38 7-9 6-9 13-4 12 9-2 19-26 23-40 2-7 1-11-2-11z" stroke="#fff" strokeWidth="4" />;
const Acrobat = () => <Tile><path d="M0 0h88v88H0z" fill="#a12717" /><AcroShape /></Tile>;
const AcrobatMini = () => <S w={33} vb="0 0 88 88" className="rounded-lg"><path d="M0 0h88v88H0z" fill="#a12717" /><AcroShape /></S>;
const PreviewArt = () => (
  <>
    <rect width="88" height="88" rx="20" fill="#f2f2f2" />
    <path d="M7 14q0-7 7-7h60q7 0 7 7v34H7z" fill="#8fb0ea" /><path d="M7 48h74v18H7z" fill="#33406f" />
    <path d="M7 64q16-6 30 6 20 4 44 0v4q0 7-7 7H14q-7 0-7-7z" fill="#857a6c" /><path d="M9 68q9-6 14 2t14 5" stroke="#e8e6e0" strokeWidth="4" />
    <path d="M47 60h34l9 27q0 6-8 6H46q-8 0-8-6z" fill="#dfe2e6" stroke="#b6bac0" />
    <path d="M56 68l9-2-2 9-8 2zM68 74l8-3-1 10-8 2zM52 82l10-2-2 6z" fill="#7f8b9b" />
    <path d="M45 48q0-5 19-5t19 5v11q-19 7-38 0z" fill="#121212" /><path d="M46 48q18 5 36 0" stroke="#444" />
  </>
);
const Preview = () => <S w={92} h={94}><PreviewArt /></S>;
const VSArt = () => <><path d="M56 13 74 22v44L56 75z" fill="#4a9be8" /><path d="M56 13 12 57l6 6 38-28z" fill="#2b66a8" /><path d="M56 75 12 31l6-6 38 28z" fill="#3578c5" /></>;
const VSCode = () => <Tile className="bg-white"><VSArt /></Tile>;
const PPT = () => (
  <Tile className="bg-white"><circle cx="46" cy="44" r="29" fill="#c9543a" /><path d="M46 15a29 29 0 0 1 29 29H46z" fill="#ef9273" /><path d="M46 15v29H17a29 29 0 0 1 29-29z" fill="#de6e50" /><rect x="10" y="27" width="33" height="33" rx="4" fill="#bf4a2c" /><text x="26.5" y="52" textAnchor="middle" fontSize="23" fontWeight="700" fontFamily="Inter" fill="#fff">P</text></Tile>
);
const PhoneThumb = () => (
  <S w={46} h={102}><path d="M5 1h36v6H5zM3 7h40v6H3z" fill="#222" stroke="#fff" strokeWidth="2.5" /><rect y="12" width="46" height="90" fill="#fff" /><path d="M4 16h38v82H4z" fill="#14182a" /><path d="M4 16h38v12H4z" fill="#33363c" /><path d="M4 29h38v14H4z" fill="#f2f3f5" /><path d="M13 53h20" stroke="#e7b93e" strokeWidth="3" /><path d="M13 46h20M16 60h14M16 64h12" stroke="#8d92a8" strokeWidth="1.5" /><rect x="24" y="66" width="13" height="20" fill="#fff" /><path d="M24 81h13" stroke="#e7b93e" strokeWidth="3" /><path d="M8 68h8M8 73h8M8 78h8M8 90h12" stroke="#6a7087" strokeWidth="1.5" /><path d="M4 92h38v6H4z" fill="#33363c" /></S>
);
const WindowThumb = () => (
  <S w={104} h={76}><path d="M0 0h102v45H0z" fill="#fafafa" /><path d="M0 0h102v4H0z" fill="#d9d9d9" /><path d="M4 7h94M4 13h94" stroke="#aaa" strokeWidth="1.5" strokeDasharray="8 4 14 3" /><path d="M0 10h102M0 15h102" stroke="#ddd" /><path d="M90 11h8v3h-8z" fill="#3a86e0" /><path d="M4 19h7M4 22h10M4 25h8M28 18h12M28 21h14M28 24h10M28 27h14M50 18h10M50 21h8M50 24h9" stroke="#999" /><path d="M0 40h102v5H0z" fill="#ddd" /><path d="M4 42h60" stroke="#999" strokeDasharray="6 3" /><g transform="translate(67 41) scale(.36)"><PreviewArt /></g></S>
);
const WordThumb = () => (
  <S w={104} h={82}><path d="M0 0h103v60H0z" fill="#e3e3e3" /><path d="M0 0h103v4H0z" fill="#2d5eb0" /><path d="M0 4h103v6H0z" fill="#f4f4f4" /><path d="M3 7h96" stroke="#999" strokeWidth="2" strokeDasharray="5 3 9 2" /><path d="M0 10h103v2H0z" fill="#f6e9c4" /><path d="M26 13h52v46H26z" fill="#fff" /><path d="M42 17h20M34 21h38M34 26h38M34 29h38M34 32h30M34 36h38M34 39h38M34 44h38M34 48h38M34 51h38M34 54h30" stroke="#999" strokeWidth="1.5" /><path d="M38 20h12M34 24h14" stroke="#ecd950" strokeWidth="2" /><rect x="69" y="47" width="33" height="33" rx="8" fill="#fff" /><path d="M78 52h18v22H78z" fill="#3f7fd6" /><path d="M78 63h18v11H78z" fill="#214a9c" /><rect x="71" y="56" width="14" height="13" rx="2" fill="#2a5bbb" /><text x="78" y="66" textAnchor="middle" fontSize="10" fontWeight="700" fontFamily="Inter" fill="#fff">W</text></S>
);
const Trash = () => (
  <S w={80} h={104}><defs><linearGradient id="tr"><stop stopColor="#bcbcbc" /><stop offset=".5" stopColor="#ececec" /><stop offset="1" stopColor="#b4b4b4" /></linearGradient></defs><path d="M3 16 9 92q3 10 31 10t31-10l6-76z" fill="url(#tr)" /><ellipse cx="40" cy="16" rx="38" ry="8" fill="#888" stroke="#e2e2e2" strokeWidth="2" /><path d="M10 18 14 4l10-3 8 6 6-4 8 8 4-10 10 6 8 2 2 9-14 6-14-2-14 3z" fill="#dcdcdc" /><path d="M22 10l8 6-6 5zM44 12l6 6 6-8zM58 10l6 8 4-6z" fill="#555" /><path d="M30 12l6-2 2 6-6 2z" fill="#3fc0d8" /><path d="M56 14l5-2 1 6z" fill="#e07b3c" /><path d="M24 30l4 60M52 28l-3 64" stroke="#fff" strokeWidth="3" opacity=".6" /></S>
);

const DOCK = [
  [Finder, "w-[115px]", 1], [Launchpad, "w-[115px]"], [ChromeDock, "w-[115px]", 1], [Safari, "w-[116px]"], [Mail, "w-[116px]", 1, "5,689"], [Cal, "w-[115px]"],
  [Notes, "w-[115px]", 1], [Keynote, "w-[115px]"], [Settings, "w-[115px]", 0, "1"], [Spotify, "w-[116px]", 1], [Outlook, "w-[114px]"],
  [() => <Office ch="X" badge="#1e7040" c={["#4da56e", "#65c088", "#4a9f68", "#397c4a", "#2c5c3b"]} />, "w-[116px]", 1],
  [Whats, "w-[115px]", 1],
  [() => <Office ch="W" badge="#2450b0" c={["#5ba0e8", "#5ba0e8", "#4179cc", "#2d57b4", "#213e87"]} />, "w-[115px]", 1],
  [CalApp, "w-[115px]", 1], [RingApp, "w-[115px]"], [Phone, "w-[116px]"], [ReplitDock, "w-[115px]"],
];
const DOCK2 = [[Acrobat, "w-[115px]", 1], [Preview, "w-[116px]", 1], [VSCode, "w-[114px]", 1], [PPT, "w-[115px]", 1]];

const DockItem = ({ Icon, w, dot, badge }) => (
  <div className={`relative flex h-full shrink-0 flex-col items-center ${w}`}>
    <div className="flex h-[124px] items-center"><Icon /></div>
    {dot ? <span className="size-2 rounded-full bg-black" /> : null}
    {badge ? (
      <span className={`absolute top-[8px] flex h-[42px] items-center justify-center rounded-full bg-[#dd5040] text-[23px] text-white shadow ${badge.length > 1 ? "left-[45px] w-[70px] tracking-[-1.2px]" : "left-[73px] w-[42px]"}`}>{badge}</span>
    ) : null}
  </div>
);

function Dock() {
  return (
    <div className="mt-4 ml-[98px] flex h-[138px] w-[3224px] shrink-0 rounded-[42px] border-2 border-[#727272] bg-[#535353] pl-[3px]">
      {DOCK.map(([Icon, w, dot, badge], i) => <DockItem key={i} Icon={Icon} w={w} dot={dot} badge={badge} />)}
      <span className="mt-4 mr-[23px] ml-[26px] h-[102px] w-[2px] bg-[#2c2c2c]" />
      {DOCK2.map(([Icon, w, dot], i) => <DockItem key={i} Icon={Icon} w={w} dot={dot} />)}
      <span className="mt-4 ml-[26px] h-[102px] w-[2px] bg-[#2c2c2c]" />
      <div className="flex h-[124px] items-center"><div className="ml-[59px] w-[88px]"><PhoneThumb /></div></div>
      <div className="flex h-[124px] items-end pb-[10px]"><WindowThumb /></div>
      <div className="ml-[78px] flex h-[124px] items-end pb-[13px]"><AcrobatMini /></div>
      <div className="ml-[13px] flex h-[124px] items-end pb-[11px]"><WordThumb /></div>
      <div className="ml-[24px] flex h-[124px] items-center pb-[2px]"><Trash /></div>
    </div>
  );
}

export default function App() {
  return (
    <div className="flex h-[2214px] w-[3420px] flex-col overflow-hidden bg-black font-['Inter',sans-serif]">
      <MenuBar />
      <div className="relative h-[1972px] shrink-0 pl-[6px]">
        <div className="absolute top-0 left-0 h-[1935px] w-10 rounded-l-[20px] bg-[#bdbdbd]" />
        <div className="relative flex h-full w-[3414px] flex-col overflow-hidden rounded-[20px] bg-[#d3e8c3]">
          <TabStrip />
          <Toolbar />
          <Bookmarks />
          <div className="flex h-[1730px] shrink-0">
            <Page />
            <div className="w-[17px] shrink-0 bg-[#f0f0f0] pt-[1197px]">
              <div className="ml-[1px] h-[132px] w-[15px] rounded-full bg-[#888]" />
            </div>
          </div>
        </div>
      </div>
      <Dock />
    </div>
  );
}
